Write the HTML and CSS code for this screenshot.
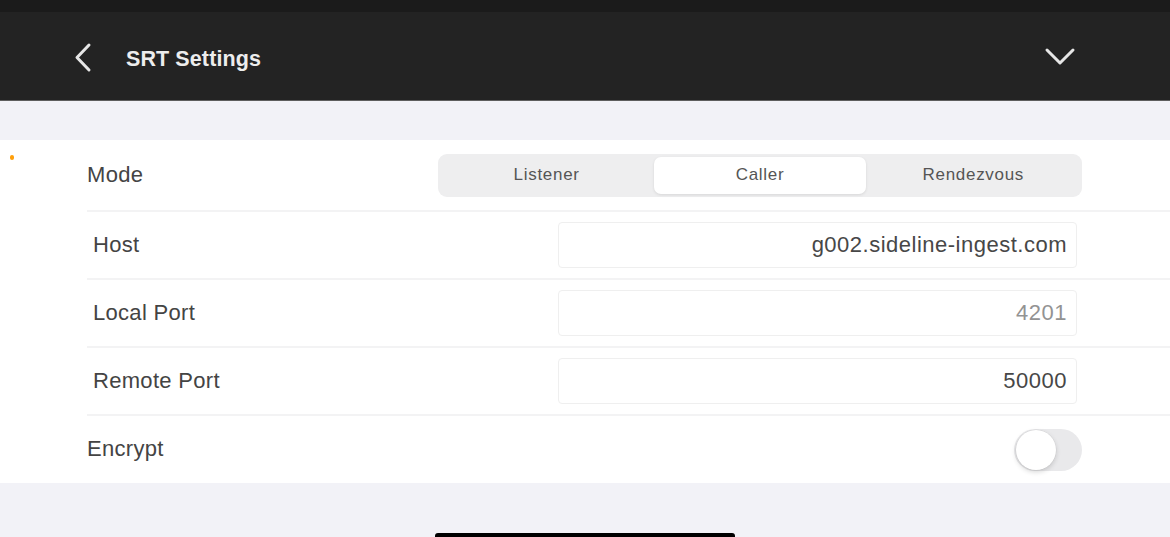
FILE: index.html
```html
<!DOCTYPE html>
<html lang="en">
<head>
<meta charset="utf-8">
<title>SRT Settings</title>
<link rel="stylesheet" href="styles.css">
</head>
<body>
<div class="screen">
  <div class="status"></div>
  <header class="nav">
    <div class="nav-left">
      <svg class="back" width="20" height="31" viewBox="0 0 20 31"><polyline points="16,3 4,15.5 16,28" fill="none" stroke="#e6e6e6" stroke-width="3" stroke-linecap="round" stroke-linejoin="round"/></svg>
      <span class="title">SRT Settings</span>
    </div>
    <svg class="down" width="32" height="20" viewBox="0 0 32 20"><polyline points="3,3 16,16 29,3" fill="none" stroke="#e6e6e6" stroke-width="3" stroke-linecap="round" stroke-linejoin="round"/></svg>
  </header>
  <div class="gap"></div>
  <section class="panel">
    <span class="dot"></span>
    <div class="row row-first">
      <span class="label">Mode</span>
      <div class="segmented">
        <span class="seg">Listener</span>
        <span class="seg seg-on">Caller</span>
        <span class="seg">Rendezvous</span>
      </div>
    </div>
    <div class="row">
      <span class="label label-inset">Host</span>
      <div class="field"><span class="value">g002.sideline-ingest.com</span></div>
    </div>
    <div class="row">
      <span class="label label-inset">Local Port</span>
      <div class="field"><span class="value value-muted">4201</span></div>
    </div>
    <div class="row">
      <span class="label label-inset">Remote Port</span>
      <div class="field"><span class="value">50000</span></div>
    </div>
    <div class="row">
      <span class="label">Encrypt</span>
      <div class="toggle"><span class="knob"></span></div>
    </div>
  </section>
  <footer class="bottom">
    <span class="home"></span>
  </footer>
</div>
</body>
</html>
```
FILE: styles.css
```css
* { box-sizing: border-box; }
html, body {
  margin: 0;
  padding: 0;
  background: #f2f2f7;
  font-family: "Liberation Sans", Arial, sans-serif;
}
.screen {
  width: 1170px;
  height: 537px;
  display: flex;
  flex-direction: column;
  overflow: hidden;
}
.status {
  height: 12px;
  background: #1b1b1b;
  flex: none;
}
.nav {
  height: 89px;
  flex: none;
  background: #232323;
  border-bottom: 1px solid #5e5e5e;
  display: flex;
  align-items: center;
  justify-content: space-between;
  padding: 0 94px 0 73px;
}
.nav-left {
  display: flex;
  align-items: center;
  gap: 33px;
}
.back { display: block; margin-top: 2px; }
.down { display: block; margin-top: 2px; }
.title {
  color: #ededed;
  font-size: 21.5px;
  font-weight: bold;
  letter-spacing: 0.1px;
  margin-top: 6px;
}
.gap {
  height: 39px;
  flex: none;
}
.panel {
  position: relative;
  background: #ffffff;
  flex: none;
  padding: 0 0 1px 87px;
}
.dot {
  position: absolute;
  left: 10px;
  top: 15px;
  width: 4px;
  height: 5px;
  border-radius: 2px;
  background: #ff9f0a;
}
.row {
  height: 68px;
  display: flex;
  align-items: center;
  justify-content: space-between;
  padding-right: 88px;
  border-top: 2px solid #f3f3f4;
}
.row-first {
  height: 70px;
  border-top: none;
}
.label {
  font-size: 22px;
  letter-spacing: 0.3px;
  color: #444444;
}
.label-inset { padding-left: 6px; }
.segmented {
  width: 644px;
  height: 43px;
  background: #eeeeef;
  border-radius: 9px;
  display: flex;
  padding: 3px;
}
.seg {
  flex: 1;
  display: flex;
  align-items: center;
  justify-content: center;
  font-size: 17px;
  letter-spacing: 0.7px;
  color: #555555;
  border-radius: 7px;
}
.seg-on {
  background: #ffffff;
  box-shadow: 0 1px 3px rgba(0,0,0,0.10);
  margin: 0 2px;
}
.field {
  width: 519px;
  height: 46px;
  margin-right: 5px;
  border: 1px solid #efefef;
  border-radius: 4px;
  display: flex;
  align-items: center;
  justify-content: flex-end;
  padding-right: 9px;
}
.value {
  font-size: 22px;
  letter-spacing: 0.5px;
  color: #474747;
}
.value-muted { color: #939393; }
.toggle {
  width: 68px;
  height: 42px;
  border-radius: 21px;
  background: #e9e9eb;
  padding: 2px;
  display: flex;
  align-items: center;
  margin-top: 2px;
}
.knob {
  width: 40px;
  height: 40px;
  border-radius: 50%;
  background: #ffffff;
  box-shadow: 0 2px 5px rgba(0,0,0,0.16), 0 0 0 0.5px rgba(0,0,0,0.06);
}
.bottom {
  flex: 1;
  display: flex;
  align-items: flex-end;
  justify-content: center;
}
.home {
  width: 300px;
  height: 4px;
  background: #000000;
  border-radius: 3px 3px 0 0;
}
```
